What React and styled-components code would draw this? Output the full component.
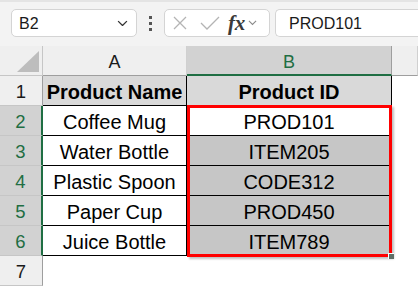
import React from "react";
import styled, { createGlobalStyle } from "styled-components";

const GlobalStyle = createGlobalStyle`
  html, body {
    margin: 0;
    padding: 0;
    background: #ffffff;
    overflow: hidden;
  }
  body {
    font-family: "Liberation Sans", Arial, sans-serif;
  }
`;

const green = "#1f6e43";

const Page = styled.div`
  width: 418px;
  height: 286px;
  overflow: hidden;
  background: #fff;
`;

const Toolbar = styled.div`
  height: 46px;
  box-sizing: border-box;
  background: #f3f3f3;
  border-top: 2px solid #e4e4e4;
  display: flex;
  align-items: flex-start;
  padding: 7px 0 0 11px;
`;

const Box = styled.div`
  height: 28px;
  box-sizing: border-box;
  background: #fff;
  border: 1px solid #d4d4d4;
  border-radius: 5px;
  display: flex;
  align-items: center;
  flex: ${(p) => (p.$grow ? 1 : "none")};
  width: ${(p) => (p.$w ? `${p.$w}px` : "auto")};
  margin-right: ${(p) => (p.$mr ? `${p.$mr}px` : "0")};
  border-top-right-radius: ${(p) => (p.$open ? 0 : "5px")};
  border-bottom-right-radius: ${(p) => (p.$open ? 0 : "5px")};
  border-right: ${(p) => (p.$open ? "none" : "1px solid #d4d4d4")};
`;

const BoxText = styled.span`
  font-size: 16px;
  color: #1a1a1a;
  padding-left: ${(p) => p.$pl}px;
  padding-top: 1px;
  flex: 1;
  white-space: nowrap;
`;

const Dots = styled.div`
  width: 27px;
  height: 28px;
  display: flex;
  flex-direction: column;
  align-items: center;
  justify-content: center;
  gap: 3px;
  & > i {
    width: 3px;
    height: 3px;
    background: #555;
  }
`;

const Fx = styled.span`
  font-family: "Liberation Serif", "Times New Roman", serif;
  font-style: italic;
  font-weight: bold;
  font-size: 21px;
  color: #3a3a3a;
  margin-left: 8px;
  letter-spacing: -0.3px;
`;

const Sheet = styled.div`
  position: relative;
  display: grid;
  grid-template-columns: 43px 144px 205px 1fr;
  grid-auto-rows: 30px;
`;

const Corner = styled.div`
  background: #efefef;
  border-right: 1px solid #c6c6c6;
  border-bottom: 1px solid #c6c6c6;
  position: relative;
  &::after {
    content: "";
    position: absolute;
    right: 3px;
    bottom: 3px;
    width: 0;
    height: 0;
    border-left: 22px solid transparent;
    border-bottom: 21px solid #bdbdbd;
  }
`;

const ColHead = styled.div`
  box-sizing: border-box;
  background: ${(p) => (p.$sel ? "#d2d2d2" : "#efefef")};
  border-right: 1px solid ${(p) => (p.$sel ? "#9e9e9e" : "#d0d0d0")};
  border-bottom: ${(p) => (p.$sel ? `2px solid ${green}` : "1px solid #9e9e9e")};
  color: ${(p) => (p.$sel ? green : "#1a1a1a")};
  font-size: 18px;
  display: flex;
  align-items: center;
  justify-content: center;
  padding-top: 4px;
`;

const RowHead = styled.div`
  box-sizing: border-box;
  background: ${(p) => (p.$sel ? "#d2d2d2" : "#efefef")};
  border-right: ${(p) => (p.$sel ? `2px solid ${green}` : "1px solid #9e9e9e")};
  border-bottom: 1px solid #c6c6c6;
  color: ${(p) => (p.$sel ? green : "#1a1a1a")};
  font-size: 18.5px;
  display: flex;
  align-items: center;
  justify-content: center;
  padding-top: 3px;
`;

const Cell = styled.div`
  box-sizing: border-box;
  background: ${(p) => p.$bg || "#fff"};
  border-right: ${(p) => (p.$line ? "1px solid #000" : "none")};
  border-bottom: ${(p) => (p.$line ? "1px solid #000" : "none")};
  font-size: 20px;
  font-weight: ${(p) => (p.$bold ? "bold" : "normal")};
  color: #000;
  display: flex;
  align-items: center;
  justify-content: center;
  padding-top: 4px;
  white-space: nowrap;
  overflow: hidden;
`;

const Selection = styled.div`
  position: absolute;
  left: 187px;
  top: 59px;
  width: 205px;
  height: 152px;
  box-sizing: border-box;
  border: 3px solid #ff0000;
  box-shadow: 2px 2px 2px rgba(0, 0, 0, 0.25);
  pointer-events: none;
`;

const Handle = styled.div`
  position: absolute;
  right: -5px;
  bottom: -5px;
  width: 5px;
  height: 5px;
  background: #5f6e66;
  border-left: 1px solid #fff;
  border-top: 1px solid #fff;
`;

const Chevron = ({ size = 10, color = "#444", style }) => (
  <svg width={size} height={size * 0.6} viewBox="0 0 10 6" style={style}>
    <path d="M1 1 L5 5 L9 1" fill="none" stroke={color} strokeWidth="1.2" />
  </svg>
);

const rows = [
  ["Coffee Mug", "PROD101"],
  ["Water Bottle", "ITEM205"],
  ["Plastic Spoon", "CODE312"],
  ["Paper Cup", "PROD450"],
  ["Juice Bottle", "ITEM789"],
];

export default function App() {
  return (
    <Page>
      <GlobalStyle />
      <Toolbar>
        <Box $w={126}>
          <BoxText $pl={7}>B2</BoxText>
          <Chevron size={11} color="#333" style={{ marginRight: 8 }} />
        </Box>
        <Dots>
          <i />
          <i />
          <i />
        </Dots>
        <Box $w={106} $mr={5}>
          <svg width="16" height="16" viewBox="0 0 16 16" style={{ marginLeft: 7 }}>
            <path d="M2 2 L14 14 M14 2 L2 14" stroke="#b4b4b4" strokeWidth="1.3" fill="none" />
          </svg>
          <svg width="20" height="16" viewBox="0 0 20 16" style={{ marginLeft: 12 }}>
            <path d="M1 8 L7 14 L19 2" stroke="#b4b4b4" strokeWidth="1.3" fill="none" />
          </svg>
          <Fx>fx</Fx>
          <Chevron size={9} color="#8a8a8a" style={{ marginLeft: 3 }} />
        </Box>
        <Box $grow $open>
          <BoxText $pl={13}>PROD101</BoxText>
        </Box>
      </Toolbar>
      <Sheet>
        <Corner />
        <ColHead>A</ColHead>
        <ColHead $sel>B</ColHead>
        <ColHead />

        <RowHead>1</RowHead>
        <Cell $line $bold $bg="#d9d9d9">Product Name</Cell>
        <Cell $line $bold $bg="#d9d9d9">Product ID</Cell>
        <Cell />

        {rows.map(([name, id], i) => (
          <React.Fragment key={id}>
            <RowHead $sel>{i + 2}</RowHead>
            <Cell $line>{name}</Cell>
            <Cell $line $bg={i === 0 ? "#fff" : "#c6c6c6"}>{id}</Cell>
            <Cell />
          </React.Fragment>
        ))}

        <RowHead>7</RowHead>
        <Cell />
        <Cell />
        <Cell />

        <Selection>
          <Handle />
        </Selection>
      </Sheet>
    </Page>
  );
}
